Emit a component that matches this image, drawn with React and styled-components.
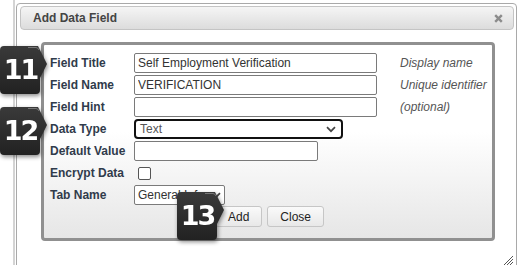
import React from 'react'
import styled, { createGlobalStyle } from 'styled-components'

const GlobalStyle = createGlobalStyle`
  body {
    margin: 0;
    background: #fff;
    font-family: "Liberation Sans", Arial, sans-serif;
    font-size: 12px;
  }
`

const Screen = styled.div`
  position: relative;
  width: 519px;
  height: 265px;
  overflow: hidden;
  padding-left: 13px;
  box-sizing: border-box;
`

const Backdrop = styled.div`
  height: 100%;
  border-left: 2px solid #d4d4d4;
  padding: 3px 0 0 1px;
  box-sizing: border-box;
`

const Dialog = styled.div`
  position: relative;
  width: 501px;
  height: 275px;
  border: 1px solid #a9a9a9;
  border-radius: 4px;
  background: #fff;
  padding: 2px 2px 0 3px;
  box-sizing: border-box;
`

const TitleBar = styled.div`
  height: 24px;
  border: 1px solid #c4c4c4;
  border-radius: 4px;
  background: linear-gradient(#f5f5f5, #dcdcdc);
  display: flex;
  align-items: center;
  justify-content: space-between;
  padding: 0 10px 0 12px;
  box-sizing: border-box;
`

const Title = styled.span`
  font-weight: bold;
  color: #444;
`

const Panel = styled.div`
  margin: 12px 0 0 21px;
  width: 454px;
  border: 3px solid #909090;
  border-radius: 4px;
  background: linear-gradient(#fff 45%, #e6e6e6);
  padding: 7px 0 10px 6px;
  box-sizing: border-box;
  display: grid;
  grid-template-columns: 84px 266px 1fr;
  grid-auto-rows: 22px;
  align-items: center;
`

const Label = styled.span`
  font-weight: bold;
  color: #303b4b;
`

const TextInput = styled.input`
  width: ${p => p.$w}px;
  height: 20px;
  box-sizing: border-box;
  border: 1px solid #7a7a7a;
  border-radius: 2px;
  padding: 0 3px;
  margin: 0;
  font: 12px "Liberation Sans", Arial, sans-serif;
  color: #333;
  background: #fff;
  outline: none;
`

const Select = styled.div`
  width: ${p => p.$w}px;
  height: 20px;
  box-sizing: border-box;
  border: ${p => (p.$focused ? '2px solid #111' : '1px solid #7a7a7a')};
  border-radius: ${p => (p.$focused ? 4 : 2)}px;
  padding: 0 ${p => (p.$focused ? 5 : 3)}px 0 ${p => (p.$focused ? 4 : 3)}px;
  display: flex;
  align-items: center;
  justify-content: space-between;
  background: #fff;
  color: ${p => (p.$focused ? '#555' : '#333')};
  white-space: nowrap;
  overflow: hidden;
`

const Check = styled.span`
  width: 13px;
  height: 13px;
  margin-left: 4px;
  box-sizing: border-box;
  border: 1px solid #555;
  border-radius: 2px;
  background: #fff;
`

const Hint = styled.span`
  font-style: italic;
  color: #555;
`

const ButtonRow = styled.div`
  grid-column: 1 / -1;
  display: flex;
  justify-content: center;
  gap: 5px;
  padding-right: 3px;
  align-self: start;
`

const Button = styled.button`
  height: 21px;
  padding: 0 12px;
  border: 1px solid #c6c6c6;
  border-radius: 3px;
  background: linear-gradient(#fafafa, #e8e8e8);
  font: 12px "Liberation Sans", Arial, sans-serif;
  color: #222;
`

const Grip = styled.svg`
  position: absolute;
  right: 3px;
  bottom: 12px;
`

const BadgeWrap = styled.div`
  position: absolute;
  left: ${p => p.$left}px;
  top: ${p => p.$top}px;
  width: 48px;
  height: 48px;
  filter: drop-shadow(1px 2px 2px rgba(0, 0, 0, 0.45));
  z-index: 5;

  svg {
    position: absolute;
    inset: 0;
  }
`

const BadgeNum = styled.span`
  position: relative;
  display: block;
  width: 41px;
  text-align: center;
  font: bold 27px "DejaVu Sans", sans-serif;
  line-height: 48px;
  letter-spacing: -2px;
  color: #fff;
`

const Chevron = () => (
  <svg width="10" height="7" viewBox="0 0 10 7">
    <path d="M1 1.2 L5 5.2 L9 1.2" fill="none" stroke="#444" strokeWidth="1.7" />
  </svg>
)

const Badge = ({ n, left, top }) => (
  <BadgeWrap $left={left} $top={top}>
    <svg width="48" height="48" viewBox="0 0 48 48">
      <defs>
        <linearGradient id={`bg${n}`} x1="0" y1="0" x2="0" y2="1">
          <stop offset="0" stopColor="#3a3a3a" />
          <stop offset="1" stopColor="#222" />
        </linearGradient>
      </defs>
      <path
        d="M4 0 H38 L47 18 L40 32 V44 Q40 48 36 48 H4 Q0 48 0 44 V4 Q0 0 4 0 Z"
        fill={`url(#bg${n})`}
      />
      <path d="M28 1.5 H36 Q38 1.5 39 4" fill="none" stroke="#777" strokeWidth="1" />
    </svg>
    <BadgeNum>{n}</BadgeNum>
  </BadgeWrap>
)

export default function App() {
  return (
    <>
      <GlobalStyle />
      <Screen>
        <Backdrop>
          <Dialog>
            <TitleBar>
              <Title>Add Data Field</Title>
              <svg width="9" height="9" viewBox="0 0 9 9">
                <path d="M1.2 1.2 L7.8 7.8 M7.8 1.2 L1.2 7.8" stroke="#8c8c8c" strokeWidth="2.4" />
              </svg>
            </TitleBar>
            <Panel>
              <Label>Field Title</Label>
              <TextInput $w={243} defaultValue="Self Employment Verification" />
              <Hint>Display name</Hint>

              <Label>Field Name</Label>
              <TextInput $w={243} defaultValue="VERIFICATION" />
              <Hint>Unique identifier</Hint>

              <Label>Field Hint</Label>
              <TextInput $w={243} defaultValue="" />
              <Hint>(optional)</Hint>

              <Label>Data Type</Label>
              <Select $w={209} $focused>
                <span>Text</span>
                <Chevron />
              </Select>
              <span />

              <Label>Default Value</Label>
              <TextInput $w={184} defaultValue="" />
              <span />

              <Label>Encrypt Data</Label>
              <Check />
              <span />

              <Label>Tab Name</Label>
              <Select $w={91}>
                <span>General Info</span>
                <Chevron />
              </Select>
              <span />

              <ButtonRow>
                <Button>Add</Button>
                <Button>Close</Button>
              </ButtonRow>
            </Panel>
            <Grip width="10" height="10" viewBox="0 0 10 10">
              <path d="M1 10 L10 1 M4 10 L10 4 M7 10 L10 7" stroke="#555" strokeWidth="1" />
            </Grip>
          </Dialog>
        </Backdrop>
        <Badge n="11" left={0} top={46} />
        <Badge n="12" left={0} top={107} />
        <Badge n="13" left={177} top={192} />
      </Screen>
    </>
  )
}
